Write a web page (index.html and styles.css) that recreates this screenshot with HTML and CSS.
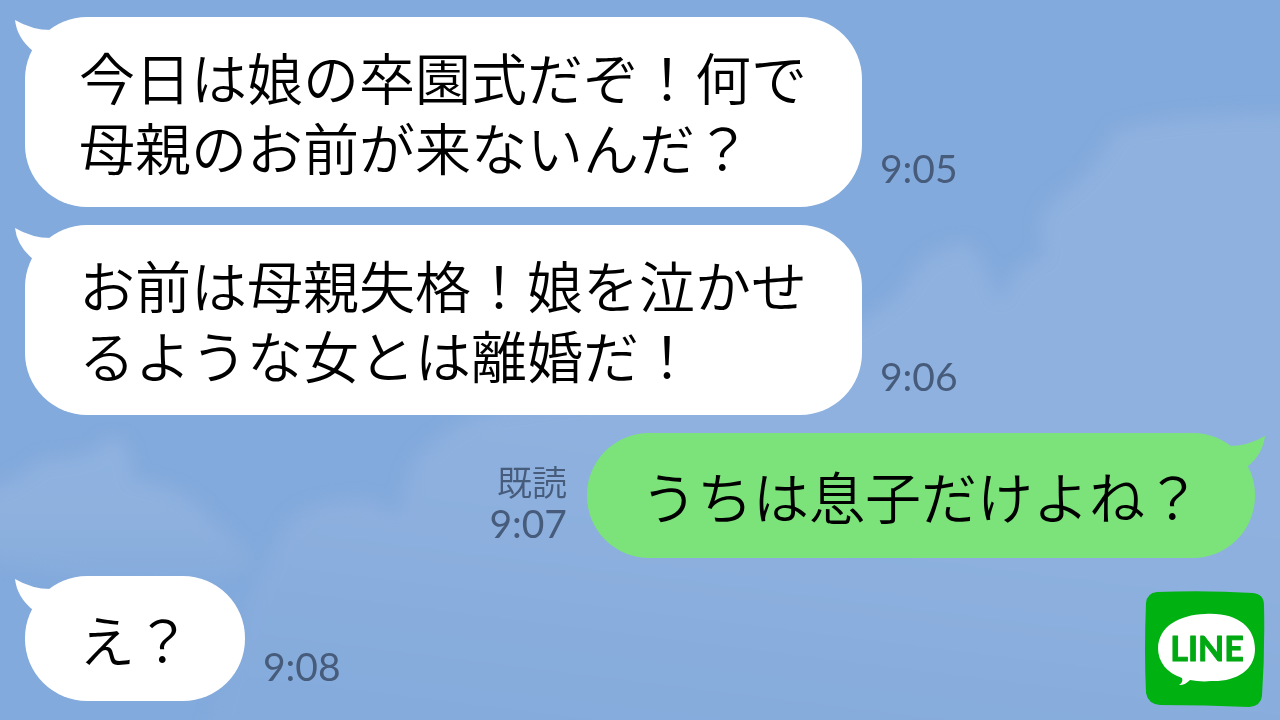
FILE: index.html
```
<!DOCTYPE html>
<html lang="ja">
<head>
    <meta charset="UTF-8">
    <meta name="viewport" content="width=device-width, initial-scale=1.0">
    <title>LINE トーク</title>
    <link rel="stylesheet" href="styles.css">
</head>
<body>

    <!-- Sky background -->
    <svg class="sky" viewBox="0 0 1280 720" preserveAspectRatio="none" aria-hidden="true">
        <defs>
            <filter id="soft" x="-10%" y="-10%" width="120%" height="120%">
                <feGaussianBlur stdDeviation="8"/>
            </filter>
            <linearGradient id="cloud" x1="0" y1="0" x2="0" y2="1">
                <stop offset="0" stop-color="#8fb2e0"/>
                <stop offset="0.6" stop-color="#8db0de"/>
                <stop offset="1" stop-color="#84abdc"/>
            </linearGradient>
            <linearGradient id="bank" gradientUnits="userSpaceOnUse" x1="500" y1="400" x2="460" y2="720">
                <stop offset="0" stop-color="#8eb1df"/>
                <stop offset="0.4" stop-color="#8cafde"/>
                <stop offset="1" stop-color="#84abdc"/>
            </linearGradient>
        </defs>
        <g filter="url(#soft)">
            <path fill="url(#bank)" d="M840 330 Q880 315 905 285 Q925 245 968 243 Q985 260 1000 300 Q1010 265 1045 255 Q1030 215 1060 195 Q1095 170 1115 130 Q1180 110 1320 115 V760 H200 Q245 600 270 560 Q285 515 310 508 Q350 495 375 502 Q390 515 402 508 Q405 465 425 450 Q460 415 500 410 Q740 380 840 330Z"/>
            <path fill="url(#cloud)" d="M-20 492 Q20 480 40 460 Q80 458 95 450 Q110 435 120 440 Q132 450 133 478 Q190 488 210 520 Q240 540 255 565 Q200 590 120 585 Q60 570 -20 560Z"/>
        </g>
    </svg>

    <!-- Messages -->
    <main class="chat">
        <div class="message">
            <p class="bubble">
                <svg class="tail" viewBox="0 0 50 50" aria-hidden="true"><path d="M0 0 Q17 10 36 10 L50 30 L30 50 L18 31 Q2 18 0 0Z"/></svg>
                今日は娘の卒園式だぞ！何で母親のお前が来ないんだ？
            </p>
            <div class="meta"><time>9:05</time></div>
        </div>

        <div class="message">
            <p class="bubble">
                <svg class="tail" viewBox="0 0 50 50" aria-hidden="true"><path d="M0 0 Q17 10 36 10 L50 30 L30 50 L18 31 Q2 18 0 0Z"/></svg>
                お前は母親失格！娘を泣かせるような女とは離婚だ！
            </p>
            <div class="meta"><time>9:06</time></div>
        </div>

        <div class="message short mine">
            <p class="bubble">
                <svg class="tail" viewBox="0 0 50 50" aria-hidden="true"><path d="M0 0 Q17 10 36 10 L50 30 L30 50 L18 31 Q2 18 0 0Z"/></svg>
                うちは息子だけよね？
            </p>
            <div class="meta"><span class="read">既読</span><time>9:07</time></div>
        </div>

        <div class="message short">
            <p class="bubble">
                <svg class="tail" viewBox="0 0 50 50" aria-hidden="true"><path d="M0 0 Q17 10 36 10 L50 30 L30 50 L18 31 Q2 18 0 0Z"/></svg>
                え？
            </p>
            <div class="meta"><time>9:08</time></div>
        </div>
    </main>

    <!-- Logo -->
    <svg class="logo" viewBox="0 0 120 116" role="img" aria-label="LINE">
        <path fill="#00b112" d="M12 1 Q60 -1 108 2 Q119 3 119 14 Q120 60 117 105 Q116 115 104 116 Q60 114 15 114 Q3 113 1 102 Q-1 60 1 12 Q2 2 12 1Z"/>
        <path fill="#fff" d="M60 23 C92 21 110 36 110 58 C110 80 90 91 66 90 C58 91 52 90 45 89 C42 92 39 94 34 94 C37 92 38 90 37 87 C22 82 13 71 13 57 C14 35 34 24 60 23Z"/>
        <text class="logo-text" x="62" y="70" text-anchor="middle">LINE</text>
    </svg>

</body>
</html>
```
FILE: styles.css
```
/* General Styles */
* {
    box-sizing: border-box;
}

body {
    font-family: "Noto Sans CJK JP", sans-serif;
    margin: 0;
    min-height: 100vh;
    background-color: #83aadc;
    color: #000;
}

.sky {
    position: fixed;
    top: 0;
    left: 0;
    width: 100%;
    height: 100%;
    z-index: -1;
}

/* Messages */
.chat {
    display: flex;
    flex-direction: column;
    gap: 18px;
    padding: 17px 25px;
}

.message {
    display: flex;
    align-items: flex-end;
    gap: 18px;
}

.mine {
    flex-direction: row-reverse;
    gap: 20px;
}

.bubble {
    position: relative;
    display: flex;
    align-items: center;
    margin: 0;
    min-height: 125px;
    max-width: 837px;
    padding: 24px 54px 26px;
    border-radius: 62px;
    background-color: #fff;
    font-size: 56px;
    font-weight: 350;
    line-height: 70px;
}

.mine .bubble {
    background-color: #7ce37a;
}

.tail {
    position: absolute;
    top: 3px;
    left: -10px;
    width: 50px;
    height: 50px;
    fill: #fff;
}

.mine .tail {
    left: auto;
    right: -10px;
    fill: #7ce37a;
    transform: scaleX(-1);
}

/* Time and read mark */
.meta {
    display: flex;
    flex-direction: column;
    align-items: flex-end;
    padding-bottom: 18px;
    color: #475b7b;
    font-size: 35px;
    line-height: 42px;
}

.short .meta {
    padding-bottom: 14px;
}

.meta time {
    font-family: Lato, sans-serif;
    font-size: 39px;
}

.read {
    font-weight: 350;
}

/* Logo */
.logo {
    position: fixed;
    right: 15px;
    bottom: 13px;
    width: 120px;
    height: 116px;
}

.logo-text {
    font-family: Lato, sans-serif;
    font-size: 34px;
    font-weight: bold;
    fill: #00a912;
    stroke: #00a912;
    stroke-width: 1;
    stroke-linejoin: round;
}
```
